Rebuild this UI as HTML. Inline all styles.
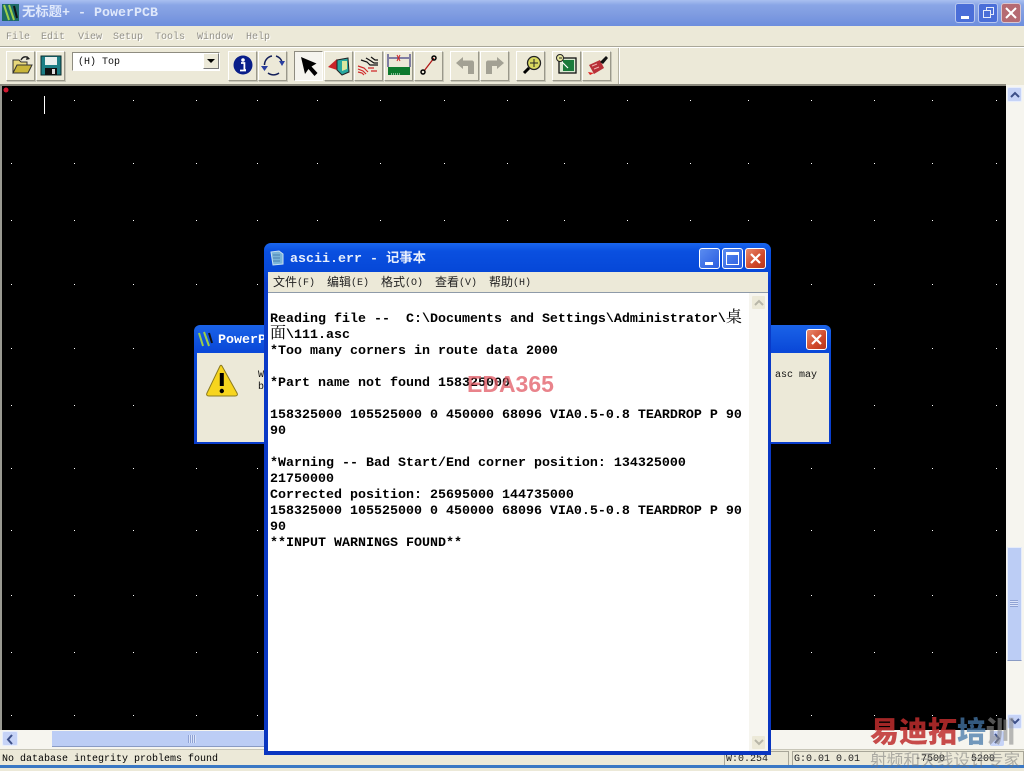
<!DOCTYPE html>
<html><head><meta charset="utf-8"><title>PowerPCB</title>
<style>
html,body{margin:0;padding:0;width:1024px;height:768px;overflow:hidden;background:#ece9d8}
div,span{position:absolute;white-space:pre}
span.i{position:static}
.m{font-family:"Liberation Mono","Noto Sans CJK SC",monospace}
.btn{background:#ece9d8;border:1px solid;border-color:#fff #9a988a #9a988a #fff;box-sizing:border-box;top:51px;height:30px;width:29px;box-shadow:1px 1px 0 #c8c6b8}
.mi{top:31px;font:10px/14px "Liberation Mono",monospace;color:#94928a;text-shadow:1px 1px 0 #fff}
.np{font:bold 13.33px/16px "Liberation Mono",monospace;color:#000;left:270px}
.c{font-family:"Noto Serif CJK SC","Noto Sans CJK SC",serif;font-weight:400;font-size:16px;line-height:0}
.nm{top:274px;font:12px/15px "Noto Sans CJK SC",sans-serif;color:#222}
.nm i{font:10px "Liberation Mono",monospace;position:relative;top:-1px}
.xb{box-sizing:border-box;width:21px;height:21px;border:1px solid #fff;border-radius:3px}
.st{top:752px;height:15px;font:10px/15px "Liberation Mono",monospace;color:#222}
</style></head><body>

<!-- main title -->
<div style="left:0;top:0;width:1024px;height:26px;background:linear-gradient(#a9c0f0 0,#8aa6e6 5px,#7d9ae0 16px,#6d8ede 26px)"></div>
<svg style="position:absolute;left:2px;top:4px" width="17" height="17"><rect width="17" height="17" fill="#1d6a68"/><path d="M2 1l5 15M7 1l5 15" stroke="#9bd04a" stroke-width="2"/><path d="M12 2l3 12" stroke="#111" stroke-width="2"/></svg>
<div class="m" style="left:22px;top:5px;font-size:13.33px;line-height:17px;font-weight:bold;color:#dfe8fb">无标题+ - PowerPCB</div>
<div style="left:955px;top:3px;width:20px;height:20px;background:#4a6ed8;border:1px solid #b7c7ef;border-radius:3px;box-sizing:border-box"><div style="left:5px;top:12px;width:8px;height:3px;background:#fff"></div></div>
<div style="left:978px;top:3px;width:20px;height:20px;background:#4a6ed8;border:1px solid #b7c7ef;border-radius:3px;box-sizing:border-box"><div style="left:7px;top:3px;width:6px;height:6px;border:1px solid #e5ebfa"></div><div style="left:4px;top:6px;width:6px;height:6px;border:1px solid #e5ebfa;background:#4a6ed8"></div></div>
<div style="left:1001px;top:3px;width:20px;height:20px;background:#b56a72;border:1px solid #d8c6d0;border-radius:3px;box-sizing:border-box"><svg style="position:absolute;left:3px;top:3px" width="12" height="12"><path d="M1 1l10 10M11 1L1 11" stroke="#fff" stroke-width="2"/></svg></div>

<!-- menu -->
<div style="left:0;top:26px;width:1024px;height:20px;background:#ece9d8"></div>
<div class="mi" style="left:6px">File</div><div class="mi" style="left:41px">Edit</div><div class="mi" style="left:78px">View</div><div class="mi" style="left:113px">Setup</div><div class="mi" style="left:155px">Tools</div><div class="mi" style="left:197px">Window</div><div class="mi" style="left:246px">Help</div>
<div style="left:0;top:46px;width:1024px;height:1px;background:#a9a799"></div>
<div style="left:0;top:47px;width:1024px;height:1px;background:#fff"></div>

<!-- toolbar -->
<div class="btn" style="left:6px"></div><div class="btn" style="left:36px"></div>
<div style="left:72px;top:52px;width:148px;height:19px;background:#fff;border:1px solid;border-color:#8e8c80 #fff #fff #8e8c80;box-sizing:border-box"></div>
<div class="m" style="left:78px;top:56px;font-size:10px;line-height:14px;color:#111">(H) Top</div>
<div style="left:203px;top:53px;width:16px;height:16px;background:#ece9d8;border:1px solid;border-color:#fff #777 #777 #fff;box-sizing:border-box"></div>
<div class="btn" style="left:228px"></div><div class="btn" style="left:258px"></div>
<div class="btn" style="left:294px;border-color:#8e8c80 #fff #fff #8e8c80;box-shadow:none;background:#f5f4ee"></div>
<div class="btn" style="left:324px"></div><div class="btn" style="left:354px"></div><div class="btn" style="left:384px"></div><div class="btn" style="left:414px"></div>
<div class="btn" style="left:450px"></div><div class="btn" style="left:480px"></div>
<div class="btn" style="left:516px"></div><div class="btn" style="left:552px"></div><div class="btn" style="left:582px"></div>
<div style="left:618px;top:48px;width:1px;height:36px;background:#b5b2a2"></div>
<div style="left:619px;top:48px;width:1px;height:36px;background:#fff"></div>

<svg style="position:absolute;left:0;top:48px" width="640" height="37" viewBox="0 48 640 37">
<!-- combobox arrow -->
<path d="M207 59h8l-4 4z" fill="#000"/>
<!-- open -->
<path d="M13 73V60h6l2 2h6v4" fill="#e8d87a" stroke="#333"/><path d="M13 73l4-8h15l-4 8z" fill="#c9b53a" stroke="#333"/><path d="M21 60c2-4 6-4 8-1" fill="none" stroke="#222" stroke-width="1.4"/><path d="M27 56l3 3-4 1z" fill="#222"/>
<!-- save -->
<rect x="41" y="56" width="20" height="19" fill="#1c7f86" stroke="#0a2a2c"/><rect x="45" y="57" width="12" height="8" fill="#e8f0ee"/><rect x="45" y="68" width="12" height="7" fill="#111"/><rect x="52" y="69" width="3" height="5" fill="#ddd"/>
<!-- info -->
<circle cx="243" cy="65" r="9.5" fill="#0a1f8a"/><circle cx="243" cy="60" r="1.8" fill="#fff"/><path d="M241 63h3.4v7H246M240 70.500h6" stroke="#fff" stroke-width="1.800" fill="none"/>
<!-- refresh -->
<path d="M272 56a9 9 0 0 0-7.500 9M268 73a9 9 0 0 0 11 0M276 56a9 9 0 0 1 6 6" fill="none" stroke="#14205a" stroke-width="1.500"/><path d="M261 66h7l-3.500 5zM279 61h6l-3 5z" fill="#2a3fa0"/>
<!-- select arrow -->
<path d="M301 57l4 17 3.500-5 6 7 3-3-6-6.500 5-3z" fill="#000"/>
<!-- route -->
<path d="M328 67l9-8v11z" fill="#c8242a"/><path d="M337 60l11-2 1 14-7 3-5-5z" fill="#28a8a0" stroke="#222"/><path d="M342 61l5 0 0 8-5 2z" fill="#d8e8a0"/>
<!-- lines -->
<path d="M361 60l6 2 3 3h8M366 58l5 3 3 2h4M371 57l4 3h3" stroke="#111" stroke-width="1.200" fill="none"/><path d="M358 66l6 2 4 4M358 69l5 2 3 3M358 72l4 1 2 2M368 68h6M371 71h6" stroke="#d0282a" stroke-width="1.200" fill="none"/>
<!-- dim -->
<path d="M388 54v13M410 54v13M389 58h20" stroke="#14146e" fill="none"/><path d="M397 55l3 6M400 55l-3 6" stroke="#d0282a"/><rect x="388" y="67" width="22" height="8" fill="#0d7a2e"/><path d="M391 74h10" stroke="#fff" stroke-dasharray="1 1"/>
<!-- line -->
<path d="M424 71l10-13" stroke="#b01818" stroke-width="1.300"/><circle cx="423" cy="72" r="2" fill="none" stroke="#000" stroke-width="1.500"/><circle cx="434" cy="58" r="2" fill="none" stroke="#000" stroke-width="1.500"/>
<!-- undo redo -->
<path d="M456 63l7-6v3.500h9c1 0 2 1 2 2V74h-6V66h-5v3z" fill="#a3a194"/>
<path d="M504 63l-7-6v3.500h-9c-1 0-2 1-2 2V74h6V66h5v3z" fill="#a3a194"/>
<!-- zoom -->
<circle cx="534" cy="63" r="6.500" fill="#d8d860" stroke="#222" stroke-width="1.300"/><path d="M534 59v8M530 63h8" stroke="#222"/><path d="M529 68l-5 5" stroke="#000" stroke-width="3"/>
<!-- board -->
<rect x="559" y="58" width="17" height="15" fill="#d8e8d0" stroke="#111" stroke-width="1.300"/><rect x="563" y="60" width="11" height="11" fill="#1a7a3a"/><circle cx="560" cy="58" r="3.500" fill="#e8e8a0" stroke="#222"/><path d="M559 58h3" stroke="#222"/><path d="M562 62l6 6" stroke="#fff" stroke-width="1.200"/>
<!-- brush -->
<path d="M589 65l11-5 4 8-10 6z" fill="#b83038"/><path d="M600 62l6-6 2 2-5 6z" fill="#111"/><path d="M588 72l6 1-4 2z" fill="#e02020"/><path d="M592 66l5-2M594 69l5-2" stroke="#f0b0b0"/>
</svg>

<!-- canvas -->
<div style="left:0;top:85px;width:1006px;height:645px;background:#000"></div>
<div style="left:0;top:85px;width:2px;height:645px;background:#9a9a92"></div>
<div style="left:0;top:84px;width:1006px;height:2px;background:#8a887c"></div>
<svg style="position:absolute;left:0;top:0" width="1006" height="730">
<defs><g id="r"><path fill="#fff" d="M11 0h1v1h-1zM74 0h1v1h-1zM133 0h1v1h-1zM196 0h1v1h-1zM257 0h1v1h-1zM317 0h1v1h-1zM380 0h1v1h-1zM444 0h1v1h-1zM507 0h1v1h-1zM564 0h1v1h-1zM627 0h1v1h-1zM690 0h1v1h-1zM748 0h1v1h-1zM811 0h1v1h-1zM874 0h1v1h-1zM932 0h1v1h-1zM996 0h1v1h-1z"/></g></defs>
<use href="#r" y="100"/><use href="#r" y="163"/><use href="#r" y="220"/><use href="#r" y="284"/><use href="#r" y="348"/><use href="#r" y="405"/><use href="#r" y="468"/><use href="#r" y="530"/><use href="#r" y="595"/><use href="#r" y="652"/><use href="#r" y="715"/>
<circle cx="6" cy="90" r="2.500" fill="#d01830"/><rect x="44" y="96" width="1" height="18" fill="#fff"/>
</svg>

<!-- right scrollbar -->
<div style="left:1006px;top:85px;width:18px;height:645px;background:#f6f5ef"></div>
<div style="left:1007px;top:87px;width:15px;height:15px;background:#c6d3f7;border:1px solid #e8eefc;box-sizing:border-box;border-radius:2px"><svg style="position:absolute;left:2px;top:3px" width="10" height="7"><path d="M1 6l4-4 4 4" stroke="#3c4f88" stroke-width="2" fill="none"/></svg></div>
<div style="left:1007px;top:547px;width:15px;height:114px;background:#bccdf5;border:1px solid #e6ecfa;border-bottom:1px solid #8a9bc4;box-sizing:border-box"></div>
<div style="left:1010px;top:600px;width:8px;height:7px;background:repeating-linear-gradient(#8fa2d4 0 1px,#dbe4fa 1px 2px)"></div>
<div style="left:1007px;top:714px;width:15px;height:15px;background:#c6d3f7;border:1px solid #e8eefc;box-sizing:border-box;border-radius:2px"><svg style="position:absolute;left:2px;top:3px" width="10" height="7"><path d="M1 1l4 4 4-4" stroke="#3c4f88" stroke-width="2" fill="none"/></svg></div>
<!-- bottom scrollbar -->
<div style="left:0;top:730px;width:1024px;height:19px;background:#f6f5ef"></div>
<div style="left:2px;top:731px;width:16px;height:15px;background:#c6d3f7;border:1px solid #e8eefc;box-sizing:border-box;border-radius:2px"><svg style="position:absolute;left:3px;top:2px" width="8" height="11"><path d="M6 1L2 5.500 6 10" stroke="#3c4f88" stroke-width="2" fill="none"/></svg></div>
<div style="left:52px;top:731px;width:240px;height:16px;background:#bccdf5;border-bottom:1px solid #8a9bc4;box-sizing:border-box"></div>
<div style="left:188px;top:735px;width:8px;height:8px;background:repeating-linear-gradient(90deg,#8fa2d4 0 1px,#dbe4fa 1px 2px)"></div>
<div style="left:990px;top:731px;width:14px;height:15px;background:#c6d3f7;border-radius:2px"><svg style="position:absolute;left:3px;top:2px" width="8" height="11"><path d="M2 1l4 4.500L2 10" stroke="#3c4f88" stroke-width="2" fill="none"/></svg></div>

<!-- status -->
<div style="left:0;top:749px;width:1024px;height:16px;background:#ece9d8;border-top:1px solid #c8c6b8;box-sizing:border-box"></div>
<div class="st" style="left:2px;color:#000">No database integrity problems found</div>
<div style="left:724px;top:751px;width:65px;height:14px;border:1px solid #a8a698;border-bottom:0;box-sizing:border-box"></div>
<div style="left:792px;top:751px;width:232px;height:14px;border:1px solid #a8a698;border-bottom:0;box-sizing:border-box"></div>
<div class="st" style="left:726px">W:0.254</div>
<div class="st" style="left:794px">G:0.01 0.01</div>
<div class="st" style="left:915px">-7500</div>
<div class="st" style="left:971px">5200</div>
<div style="left:0;top:765px;width:1024px;height:3px;background:#3a78c4"></div>

<!-- warning dialog -->
<div style="left:194px;top:325px;width:637px;height:119px;background:linear-gradient(#1a63e8,#0a48d8 26px,#0a3dcc);border-radius:6px 6px 0 0"></div>
<div style="left:197px;top:353px;width:632px;height:89px;background:#ece9d8"></div>
<svg style="position:absolute;left:198px;top:331px" width="16" height="16"><path d="M1 2l4 13M6 1l5 14" stroke="#9bd04a" stroke-width="2" fill="none"/><path d="M11 2l3 10" stroke="#111" stroke-width="2"/></svg>
<div class="m" style="left:218px;top:332px;font-size:13.33px;line-height:17px;font-weight:bold;color:#fff">PowerPCB</div>
<svg style="position:absolute;left:206px;top:364px" width="34" height="34"><path d="M16 2L31 29c1 2 0 3-2 3H3c-2 0-3-1-2-3L14 2c.5-1 1.500-1 2 0z" fill="#f7d51e" stroke="#8a7a20"/><path d="M15.800 9v13" stroke="#000" stroke-width="4"/><circle cx="15.800" cy="27" r="2.200"/></svg>
<div class="m" style="left:258px;top:370px;font-size:10px;line-height:12px;color:#111">W
b</div>
<div class="m" style="left:775px;top:370px;font-size:10px;line-height:12px;color:#111">asc may</div>
<div class="xb" style="left:806px;top:329px;background:linear-gradient(135deg,#e88a6e,#d0482a 60%,#b8361c)"><svg style="position:absolute;left:3px;top:3px" width="13" height="13"><path d="M2 2l9 9M11 2l-9 9" stroke="#fff" stroke-width="2.200"/></svg></div>

<!-- notepad -->
<div style="left:264px;top:243px;width:507px;height:512px;background:linear-gradient(#1a66ee 0,#0a50e0 8px,#0648d8 28px,#0a3ac8 40px,#0a36c0);border-radius:7px 7px 0 0"></div>
<svg style="position:absolute;left:270px;top:250px" width="14" height="16"><path d="M1 2l8-1 4 3v10l-10 1z" fill="#7ab4d8" stroke="#c8e0f0"/><path d="M3 5h7M3 8h7M3 11h7" stroke="#4a80b0"/></svg>
<div class="m" style="left:290px;top:251px;font-size:13.33px;line-height:17px;font-weight:bold;color:#e8effc">ascii.err - 记事本</div>
<div class="xb" style="left:699px;top:248px;background:linear-gradient(135deg,#5a8cf0,#2a5ce0)"><div style="left:5px;top:13px;width:8px;height:3px;background:#fff"></div></div>
<div class="xb" style="left:722px;top:248px;background:linear-gradient(135deg,#5a8cf0,#2a5ce0)"><div style="left:3px;top:3px;width:13px;height:13px;box-sizing:border-box;border:1px solid #fff;border-top-width:3px"></div></div>
<div class="xb" style="left:745px;top:248px;background:linear-gradient(135deg,#e88a6e,#d0482a 60%,#b8361c)"><svg style="position:absolute;left:3px;top:3px" width="13" height="13"><path d="M2 2l9 9M11 2l-9 9" stroke="#fff" stroke-width="2.200"/></svg></div>
<div style="left:268px;top:272px;width:500px;height:20px;background:#ece9d8"></div>
<div style="left:268px;top:292px;width:500px;height:1px;background:#8e9aa8"></div>
<div class="nm" style="left:273px">文件<i>(F)</i></div><div class="nm" style="left:327px">编辑<i>(E)</i></div><div class="nm" style="left:381px">格式<i>(O)</i></div><div class="nm" style="left:435px">查看<i>(V)</i></div><div class="nm" style="left:489px">帮助<i>(H)</i></div>
<div style="left:268px;top:293px;width:500px;height:458px;background:#fff"></div>
<div style="left:749px;top:293px;width:19px;height:458px;background:#f6f5ef"></div>
<div style="left:751px;top:295px;width:15px;height:15px;background:#ece9d8;border:1px solid #f6f5ef;box-sizing:border-box;border-radius:2px"><svg style="position:absolute;left:2px;top:3px" width="10" height="7"><path d="M1 6l4-4 4 4" stroke="#b8b6a8" stroke-width="2" fill="none"/></svg></div>
<div style="left:751px;top:735px;width:15px;height:15px;background:#ece9d8;border:1px solid #f6f5ef;box-sizing:border-box;border-radius:2px"><svg style="position:absolute;left:2px;top:3px" width="10" height="7"><path d="M1 1l4 4 4-4" stroke="#b8b6a8" stroke-width="2" fill="none"/></svg></div>

<div class="np" style="top:312px">Reading file --  C:\Documents and Settings\Administrator\<span class="i c">桌</span></div>
<div class="np" style="top:328px"><span class="i c">面</span>\111.asc</div>
<div class="np" style="top:344px">*Too many corners in route data 2000</div>
<div class="np" style="top:376px">*Part name not found 158325000</div>
<div class="np" style="top:408px">158325000 105525000 0 450000 68096 VIA0.5-0.8 TEARDROP P 90</div>
<div class="np" style="top:424px">90</div>
<div class="np" style="top:456px">*Warning -- Bad Start/End corner position: 134325000</div>
<div class="np" style="top:472px">21750000</div>
<div class="np" style="top:488px">Corrected position: 25695000 144735000</div>
<div class="np" style="top:504px">158325000 105525000 0 450000 68096 VIA0.5-0.8 TEARDROP P 90</div>
<div class="np" style="top:520px">90</div>
<div class="np" style="top:536px">**INPUT WARNINGS FOUND**</div>

<div style="left:467px;top:371px;font:bold 23px/26px 'Liberation Sans',sans-serif;color:rgba(226,90,100,.75)">EDA365</div>

<!-- watermark -->
<div style="left:870px;top:713px;font:900 29px/34px 'Noto Sans CJK SC',sans-serif;color:rgba(190,45,45,.85)">易迪拓<span class="i" style="color:rgba(70,120,170,.75)">培</span><span class="i" style="color:rgba(140,140,140,.6)">训</span></div>
<div style="left:870px;top:749px;font:16.7px/20px 'Noto Sans CJK SC',sans-serif;color:rgba(120,120,120,.55)">射频和天线设计专家</div>
</body></html>
